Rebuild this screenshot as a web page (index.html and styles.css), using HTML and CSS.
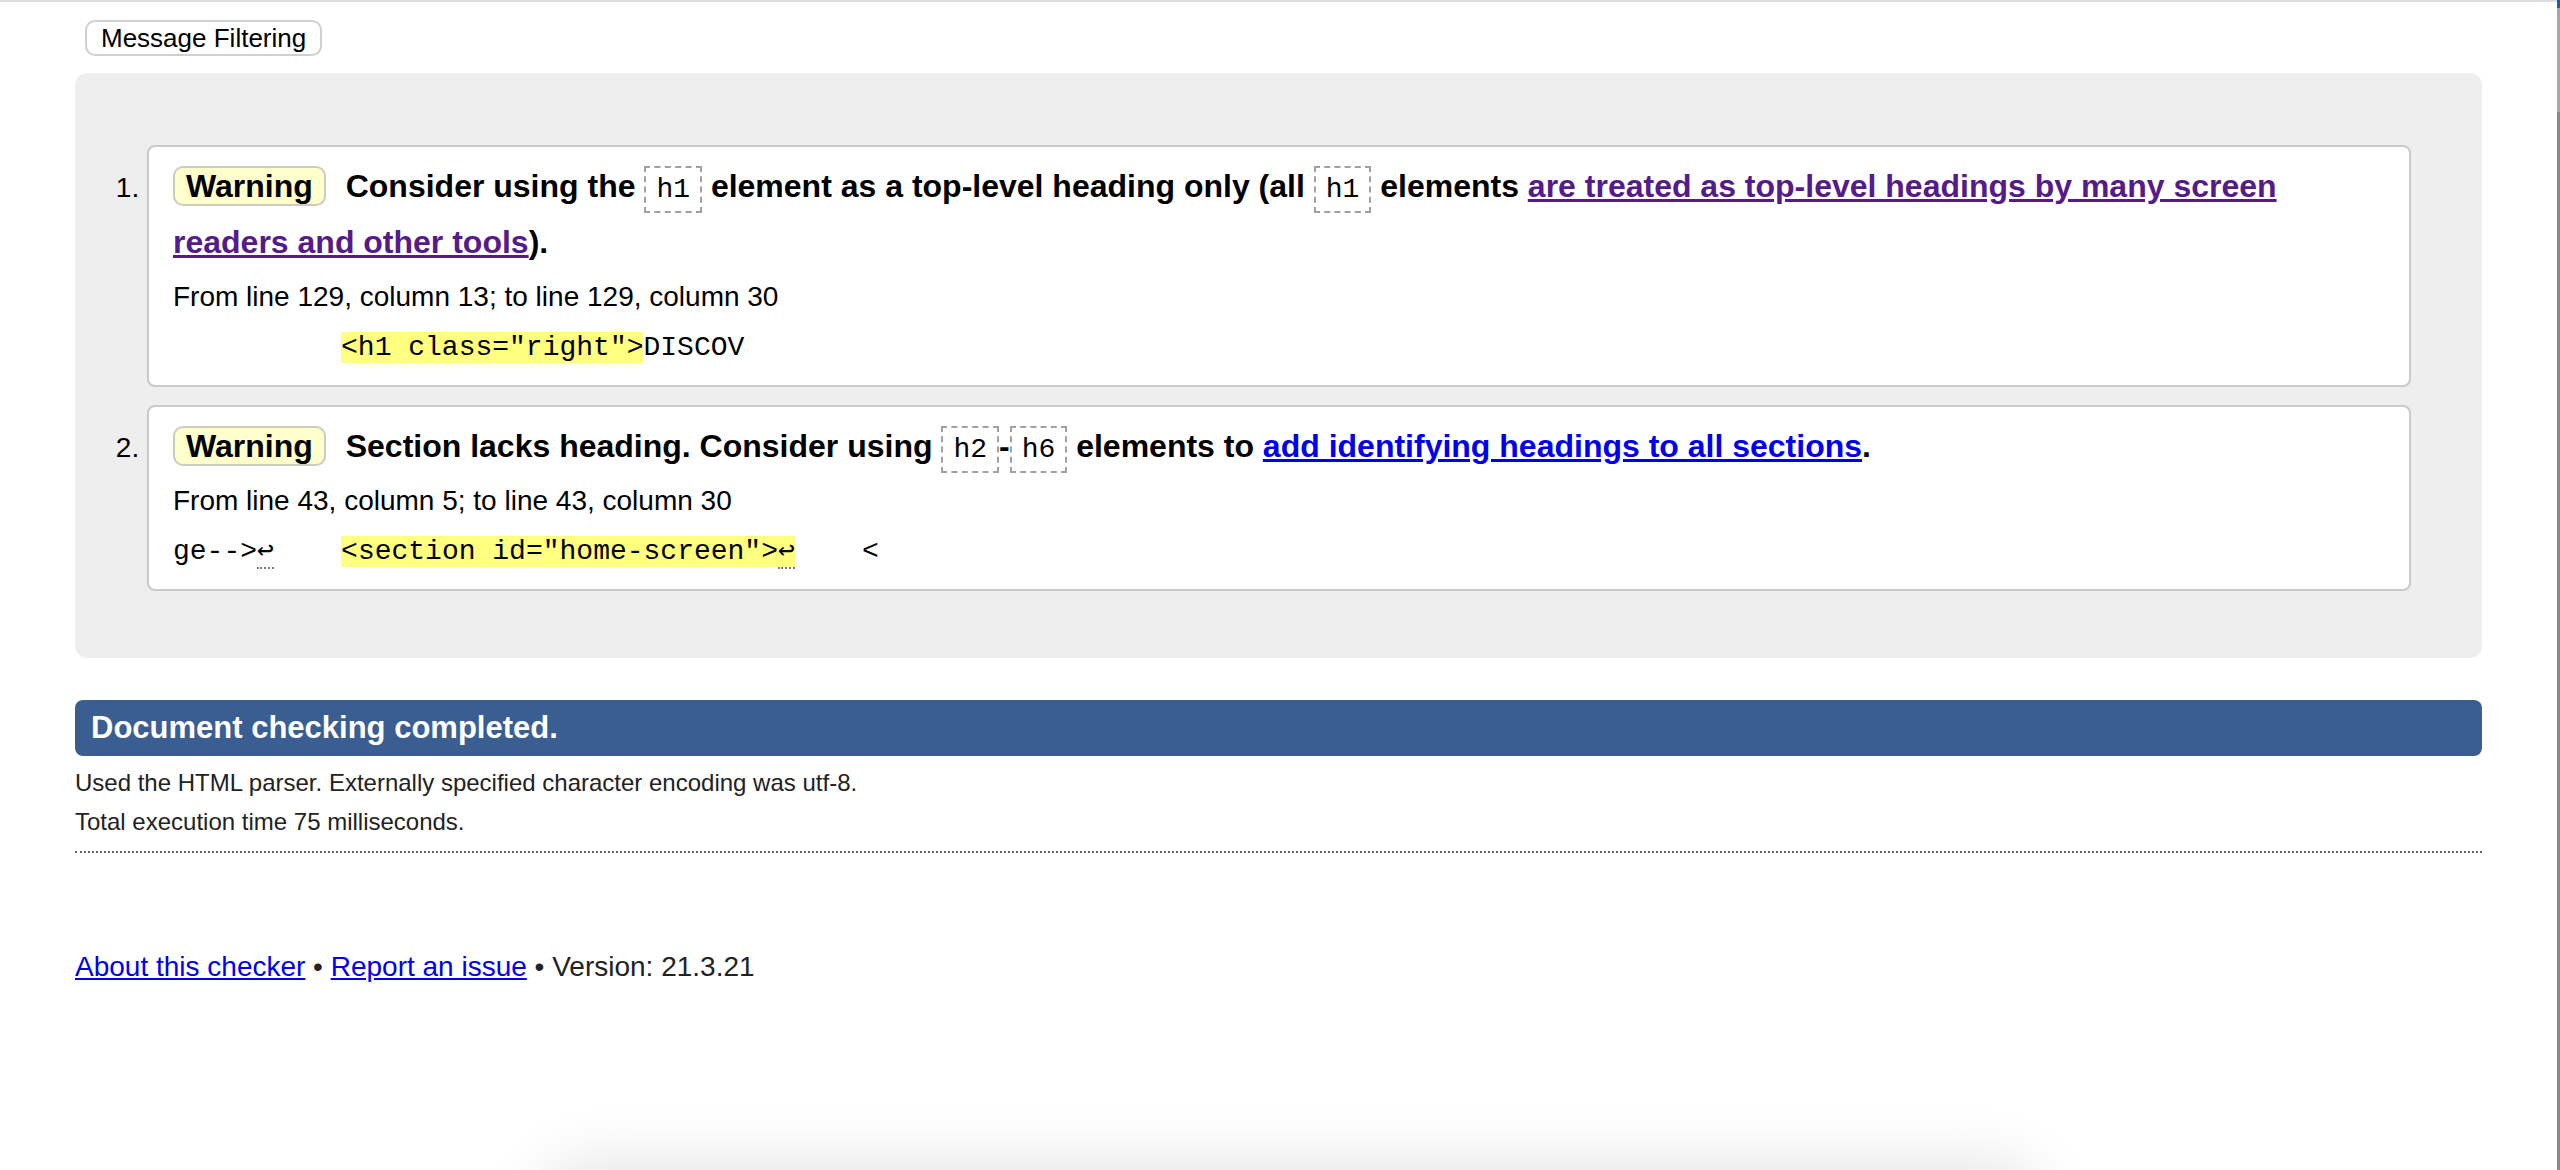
FILE: index.html
```html
<!DOCTYPE html>
<html lang="en">
<head>
<meta charset="utf-8">
<title>Nu Html Checker</title>
<link rel="stylesheet" href="styles.css">
</head>
<body>
<div class="page">
  <button class="filter-btn" type="button">Message Filtering</button>
  <div class="results">
    <ol class="messages">
      <li class="message">
        <p class="msg"><strong class="badge">Warning</strong> Consider using the <code class="tag">h1</code> element as a top-level heading only (all <code class="tag">h1</code> elements <a class="link visited" href="#">are treated as top-level headings by many screen readers and other tools</a>).</p>
        <p class="loc">From line 129, column 13; to line 129, column 30</p>
        <p class="extract"><code>          <b class="hl">&lt;h1 class="right"&gt;</b>DISCOV</code></p>
      </li>
      <li class="message">
        <p class="msg"><strong class="badge">Warning</strong> Section lacks heading. Consider using <code class="tag">h2</code>-<code class="tag">h6</code> elements to <a class="link" href="#">add identifying headings to all sections</a>.</p>
        <p class="loc">From line 43, column 5; to line 43, column 30</p>
        <p class="extract"><code>ge--&gt;<span class="lf">↩</span>    <b class="hl">&lt;section id="home-screen"&gt;<span class="lf">↩</span></b>    &lt;</code></p>
      </li>
    </ol>
  </div>
  <p class="status">Document checking completed.</p>
  <div class="details">
    <p>Used the HTML parser. Externally specified character encoding was utf-8.</p>
    <p>Total execution time 75 milliseconds.</p>
  </div>
  <p class="footer"><a class="link" href="#">About this checker</a> • <a class="link" href="#">Report an issue</a> • Version: 21.3.21</p>
</div>
<div class="edge"></div>
<div class="dock-shadow"></div>
</body>
</html>
```

FILE: styles.css
```css
html, body {
  margin: 0;
  padding: 0;
  background: #fff;
}

body {
  font-family: "Liberation Sans", Arial, Helvetica, sans-serif;
  color: #000;
  overflow: hidden;
}

.page {
  box-sizing: border-box;
  min-height: 1170px;
  border-top: 2px solid #dcdce0;
  padding: 18px 78px 0 75px;
}

.filter-btn {
  display: block;
  margin: 0 0 0 10px;
  height: 36px;
  padding: 0 14px;
  font-family: "Liberation Sans", Arial, sans-serif;
  font-size: 26px;
  color: #000;
  background: #fff;
  border: 2px solid #cfcfcf;
  border-radius: 10px;
}

.results {
  margin-top: 17px;
  background: #eee;
  border-radius: 12px;
  padding: 72px 71px 67px 72px;
}

.messages {
  margin: 0;
  padding: 0;
  list-style: decimal outside;
}

.message {
  font-size: 28px;
  background: #fff;
  border: 2px solid #c9c9c9;
  border-radius: 8px;
  padding: 11px 24px 19px 24px;
}

.message + .message {
  margin-top: 18px;
}

.msg {
  margin: 0;
  font-size: 32px;
  font-weight: bold;
  line-height: 56px;
}

.badge {
  display: inline-block;
  line-height: 36px;
  padding: 0 11px;
  margin-right: 11px;
  background: #ffffcc;
  border: 2px solid #cbcbbf;
  border-radius: 10px;
}

.tag {
  font-family: "Liberation Mono", "DejaVu Sans Mono", monospace;
  font-size: 28px;
  font-weight: normal;
  line-height: 1;
  padding: 6px 10px;
  border: 2px dashed #a0a0a0;
}

.link {
  color: #0000ee;
  text-decoration: underline;
}

.link.visited {
  color: #551a8b;
}

.loc {
  margin: 8px 0 0;
  line-height: 38px;
}

.extract {
  margin: 10px 0 0;
  line-height: 40px;
}

.extract code {
  font-family: "Liberation Mono", "DejaVu Sans Mono", monospace;
  font-size: 28px;
  line-height: 1;
  white-space: pre;
}

.hl {
  font-weight: normal;
  background: #ffff80;
}

.lf {
  border-bottom: 2px dotted #777;
}

.status {
  margin: 42px 0 0;
  background: #3a5e91;
  color: #fff;
  font-weight: bold;
  font-size: 31px;
  line-height: 56px;
  padding: 0 16px;
  border-radius: 8px;
}

.details {
  padding: 7px 0 10px;
  border-bottom: 2px dotted #666;
}

.details p {
  margin: 0;
  font-size: 24px;
  line-height: 39px;
  color: #222;
}

.footer {
  margin: 94px 0 0;
  font-size: 28px;
  line-height: 40px;
  color: #222;
}

.edge {
  position: fixed;
  top: 0;
  right: 0;
  width: 3px;
  height: 100%;
  background: linear-gradient(#1d5f9c 0 8px, #a6a6a6 8px 112px, #8a8a8a 112px);
}

.dock-shadow {
  position: fixed;
  left: 560px;
  width: 1460px;
  top: 1185px;
  height: 100px;
  border-radius: 30px;
  background: #fff;
  box-shadow: 0 0 60px 25px rgba(0, 0, 0, 0.10);
}
```
